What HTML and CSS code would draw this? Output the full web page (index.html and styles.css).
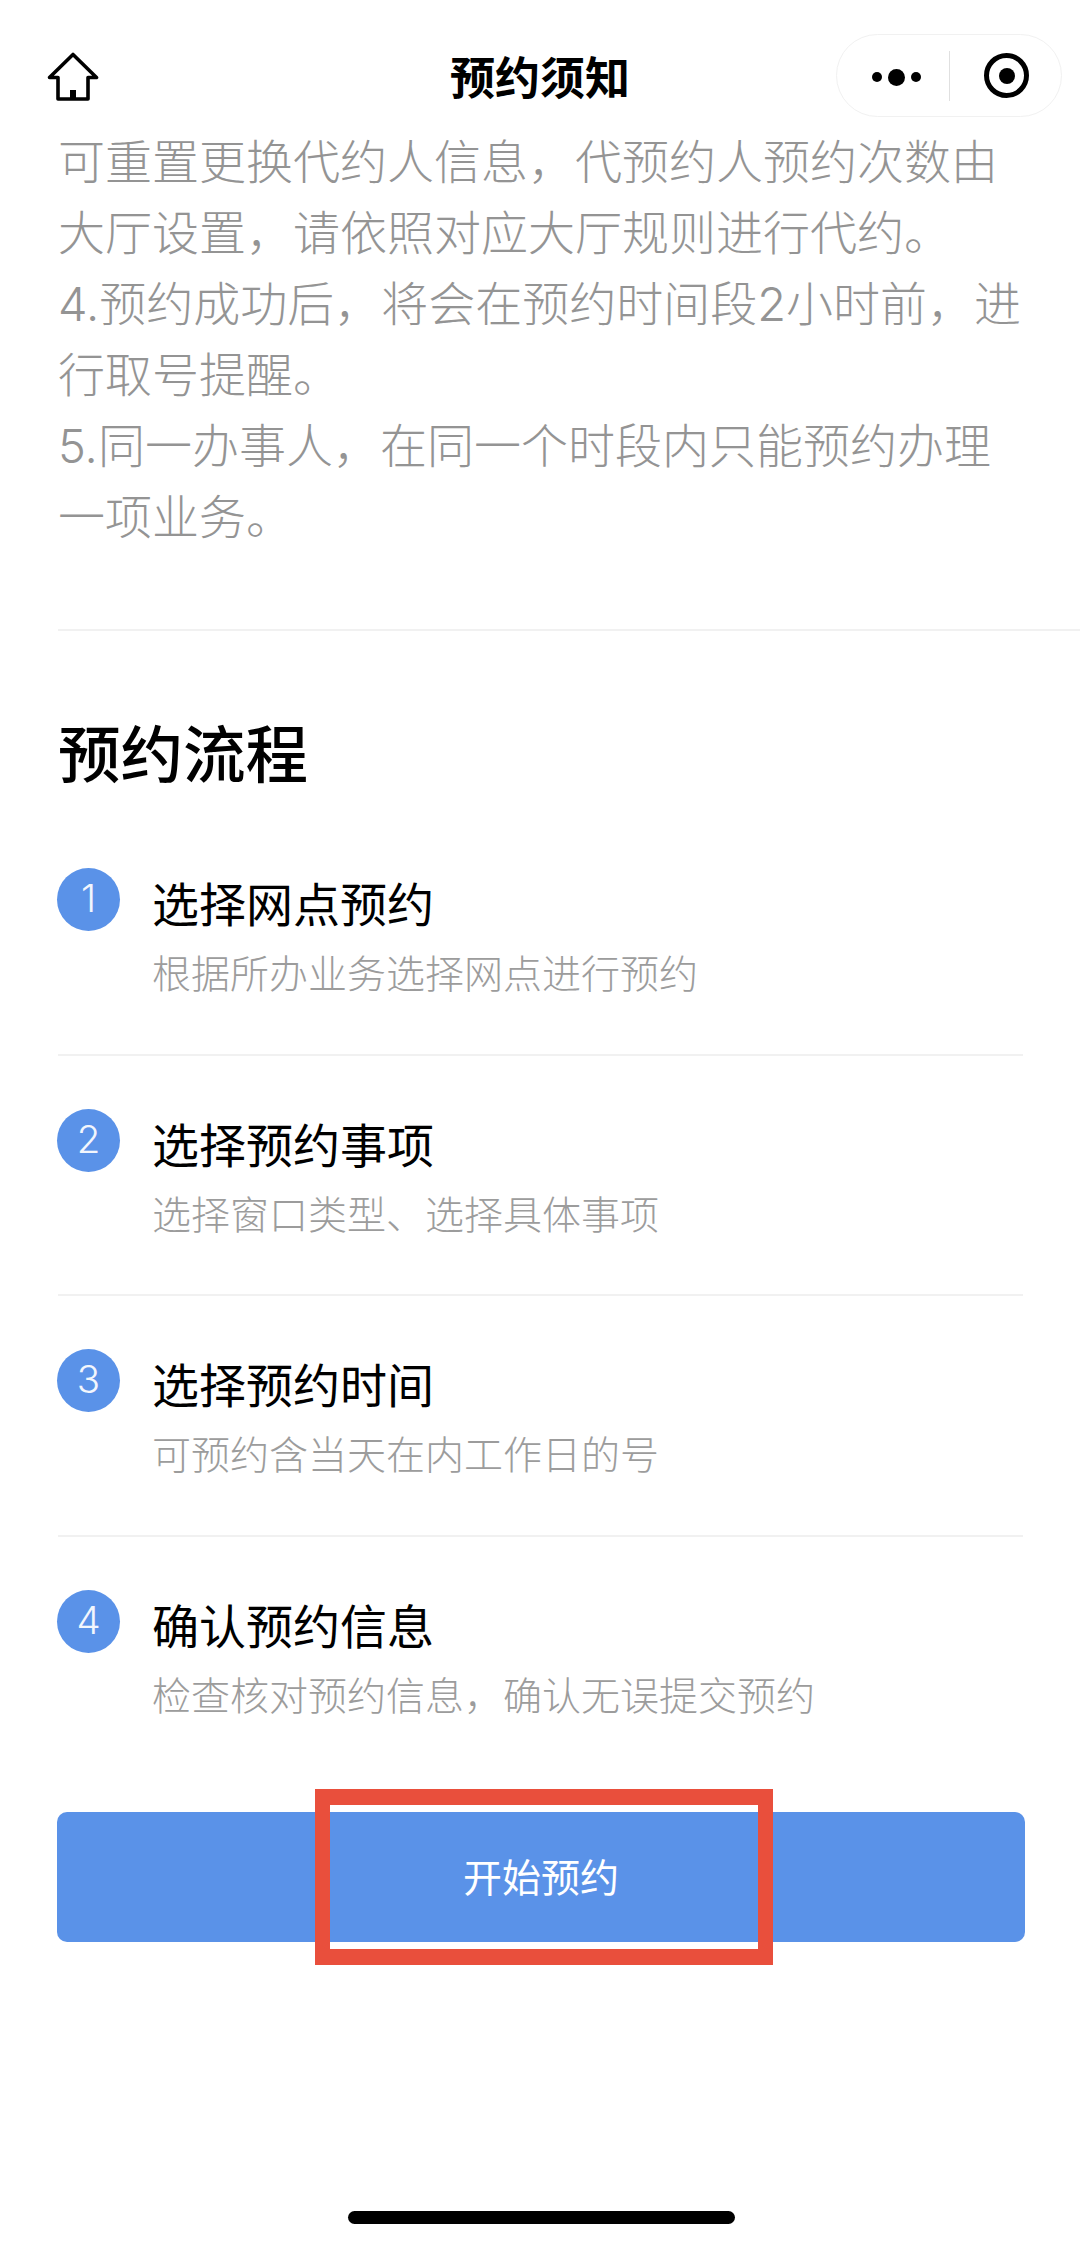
FILE: index.html
```html
<!DOCTYPE html>
<html lang="zh-CN">
<head>
<meta charset="utf-8">
<title>预约须知</title>
<link rel="stylesheet" href="styles.css">
</head>
<body>
<div class="page">
  <header class="nav">
    <svg class="home" viewBox="0 0 52 50" width="52" height="50" aria-hidden="true">
      <path d="M26 2.5 L49.5 25.5 H41 V47 H11 V25.5 H2.5 Z" fill="none" stroke="#000" stroke-width="3.6" stroke-linejoin="round"/>
      <rect x="23" y="38" width="6" height="9" fill="#000"/>
    </svg>
    <h1 class="nav-title">预约须知</h1>
    <div class="capsule">
      <div class="dots"><i class="dot"></i><i class="dot dot-big"></i><i class="dot"></i></div>
      <i class="capsule-line"></i>
      <div class="target"><i class="target-core"></i></div>
    </div>
  </header>

  <section class="notice">
    <p>可重置更换代约人信息，代预约人预约次数由大厅设置，请依照对应大厅规则进行代约。</p>
    <p>4.预约成功后，将会在预约时间段2小时前，进行取号提醒。</p>
    <p>5.同一办事人，在同一个时段内只能预约办理一项业务。</p>
  </section>

  <section class="flow">
    <h2 class="flow-title">预约流程</h2>
    <ol class="steps">
      <li class="step">
        <span class="num">1</span>
        <div class="step-text"><div class="step-name">选择网点预约</div><div class="step-desc">根据所办业务选择网点进行预约</div></div>
      </li>
      <li class="step">
        <span class="num">2</span>
        <div class="step-text"><div class="step-name">选择预约事项</div><div class="step-desc">选择窗口类型、选择具体事项</div></div>
      </li>
      <li class="step">
        <span class="num">3</span>
        <div class="step-text"><div class="step-name">选择预约时间</div><div class="step-desc">可预约含当天在内工作日的号</div></div>
      </li>
      <li class="step">
        <span class="num">4</span>
        <div class="step-text"><div class="step-name">确认预约信息</div><div class="step-desc">检查核对预约信息，确认无误提交预约</div></div>
      </li>
    </ol>
    <div class="cta-wrap">
      <button class="cta">开始预约</button>
      <div class="mark"></div>
    </div>
  </section>
  <div class="home-bar"></div>
</div>
</body>
</html>
```
FILE: styles.css
```css
* { box-sizing: border-box; }
html, body { margin: 0; padding: 0; background: #fff; }
body { font-family: "Noto Sans CJK SC", "Noto Sans", sans-serif; }
.page { position: relative; width: 1080px; height: 2244px; overflow: hidden; background: #fff; }

.nav { position: relative; display: flex; align-items: center; justify-content: space-between; height: 83px; margin-top: 34px; padding: 0 18px 0 47px; }
.home { display: block; margin-top: 3px; }
.nav-title { position: absolute; left: 0; right: 0; margin: 0; text-align: center; font-size: 45px; line-height: 83px; font-weight: 700; color: #000; }
.capsule { display: flex; align-items: center; width: 226px; height: 83px; border: 1px solid #f1f1f1; border-radius: 42px; padding-left: 35px; background: #fff; position: relative; }
.dots { display: flex; align-items: center; gap: 6px; margin-top: 3px; }
.dot { display: block; width: 10px; height: 10px; border-radius: 50%; background: #000; }
.dot-big { width: 17px; height: 17px; }
.capsule-line { display: block; width: 1px; height: 50px; background: #e0e0e0; margin-left: 28px; }
.target { display: flex; align-items: center; justify-content: center; width: 45px; height: 45px; margin-left: 34px; border: 5px solid #000; border-radius: 50%; }
.target-core { display: block; width: 16px; height: 16px; border-radius: 50%; background: #000; }

.notice { margin: 9px 0 0; padding: 0 57px 0 58px; height: 503px; font-family: "Inter", "Noto Sans CJK SC", sans-serif; font-size: 47px; font-weight: 300; line-height: 71px; color: #949494; }
.notice p { margin: 0; }

.flow { margin-left: 58px; border-top: 2px solid #f1f1f1; }
.flow-title { margin: 85px 0 0; font-size: 62.5px; line-height: 70px; font-weight: 500; color: #000; }
.steps { list-style: none; margin: 29px 0 0; padding: 0 57px 0 0; }
.step { display: flex; gap: 32px; height: 240.5px; padding-top: 53px; border-bottom: 2px solid #f1f1f1; }
.step:last-child { border-bottom: 0; height: 275.5px; }
.num { flex: none; display: flex; align-items: center; justify-content: center; width: 63px; height: 63px; margin-left: -1px; padding-bottom: 2px; border-radius: 50%; background: #5a92e8; color: #f2f6fd; font-family: "Inter", "Noto Sans", sans-serif; font-size: 38.5px; font-weight: 300; line-height: 1; }
.step-text { padding-top: 1px; }
.step-name { font-size: 47px; line-height: 66px; color: #000; }
.step-desc { margin-top: 8px; font-size: 39px; font-weight: 300; line-height: 56px; color: #9c9c9c; }

.cta-wrap { position: relative; margin: 0 55px 0 -1px; }
.cta { display: block; width: 100%; height: 130px; border: 0; border-radius: 10px; padding: 0 0 4px; background: #5a92e8; color: #fff; font: 400 39px/126px "Noto Sans CJK SC", sans-serif; }
.mark { position: absolute; left: 258px; top: -23px; width: 458px; height: 176px; border: 16px solid #e94f3c; border-left-width: 15px; border-right-width: 15px; }
.home-bar { position: absolute; left: 348px; bottom: 20px; width: 387px; height: 13px; border-radius: 7px; background: #000; }
```
